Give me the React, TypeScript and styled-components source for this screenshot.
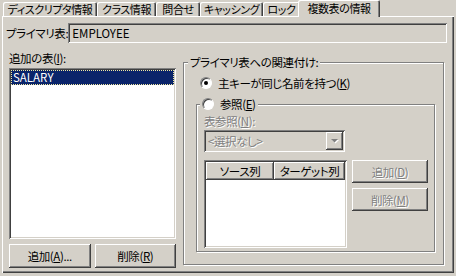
import React from 'react';
import styled, { createGlobalStyle } from 'styled-components';

const FACE = '#d4d0c8';

const GlobalStyle = createGlobalStyle`
  html, body { margin: 0; padding: 0; background: ${FACE}; }
  body {
    font-family: "Noto Sans CJK JP", "Noto Sans", sans-serif;
    font-size: 11.5px;
    color: #000;
    font-feature-settings: "palt";
    letter-spacing: -0.4px;
  }
`;

// 3D borders, classic windows style
const raised = `
  box-shadow: inset -1px -1px #404040, inset 1px 1px #fff,
    inset -2px -2px #808080, inset 2px 2px ${FACE};
`;
const sunken = `
  box-shadow: inset 1px 1px #808080, inset -1px -1px #fff,
    inset 2px 2px #404040, inset -2px -2px ${FACE};
`;

const Window = styled.div`
  width: 456px;
  height: 276px;
  box-sizing: border-box;
  padding: 0 2px 3px 2px;
  background: ${FACE};
  display: flex;
  flex-direction: column;
  overflow: hidden;
`;

const TabStrip = styled.div`
  display: flex;
  align-items: flex-end;
  height: 16px;
  padding-left: 1px;
  position: relative;
  z-index: 1;
`;

const Tab = styled.div<{ $w: number; $active?: boolean }>`
  width: ${p => p.$w}px;
  height: ${p => (p.$active ? 17 : 14)}px;
  margin-left: ${p => (p.$active ? -2 : 0)}px;
  margin-bottom: ${p => (p.$active ? -1 : 0)}px;
  box-sizing: border-box;
  background: ${FACE};
  border-radius: 2px 2px 0 0;
  box-shadow: inset 1px 1px #fff, inset -1px 0 #404040, inset -2px 0 #808080;
  display: flex;
  align-items: center;
  justify-content: center;
  font-size: 11px;
  line-height: 14px;
  white-space: nowrap;
  position: relative;
  z-index: ${p => (p.$active ? 2 : 0)};
  padding-bottom: ${p => (p.$active ? 2 : 0)}px;
`;

const Panel = styled.div`
  flex: 1;
  box-sizing: border-box;
  padding: 7px 8px 0 4px;
  box-shadow: inset 1px 1px #fff, inset -1px -1px #404040, inset -2px -2px #808080;
  display: flex;
  flex-direction: column;
`;

const TopRow = styled.div`
  display: flex;
  align-items: center;
  justify-content: space-between;
  height: 20px;
`;

const Label = styled.span`
  line-height: 14px;
  white-space: nowrap;
  flex-shrink: 0;
`;

const ReadOnlyBox = styled.div`
  width: 379px;
  height: 20px;
  box-sizing: border-box;
  padding: 0 4px;
  ${sunken}
  background: ${FACE};
  display: flex;
  align-items: center;
  letter-spacing: 0;
  flex-shrink: 0;
`;

const Body = styled.div`
  display: flex;
  gap: 7px;
  margin-top: 8px;
  padding-left: 3px;
`;

const LeftColumn = styled.div`
  width: 167px;
  display: flex;
  flex-direction: column;
`;

const ListBox = styled.div`
  height: 171px;
  margin-top: 3px;
  box-sizing: border-box;
  padding: 2px;
  background: #fff;
  ${sunken}
`;

const ListItem = styled.div<{ $selected?: boolean }>`
  height: 15px;
  line-height: 15px;
  padding-left: 2px;
  letter-spacing: 0;
  background: ${p => (p.$selected ? '#0a246a' : 'transparent')};
  color: ${p => (p.$selected ? '#fff' : '#000')};
  outline: ${p => (p.$selected ? '1px dotted #f0e8a0' : 'none')};
  outline-offset: -1px;
`;

const ButtonRow = styled.div`
  display: flex;
  gap: 4px;
  margin-top: 5px;
`;

const Button = styled.div<{ $w: number; $h?: number; $disabled?: boolean }>`
  width: ${p => p.$w}px;
  height: ${p => p.$h ?? 24}px;
  box-sizing: border-box;
  background: ${FACE};
  ${raised}
  display: flex;
  align-items: center;
  justify-content: center;
  white-space: nowrap;
  color: ${p => (p.$disabled ? '#808080' : '#000')};
  text-shadow: ${p => (p.$disabled ? '1px 1px 0 #fff' : 'none')};
`;

const Group = styled.div`
  position: relative;
  width: 261px;
  height: 203px;
  margin-top: 11px;
  box-sizing: border-box;
  border: 1px solid #808080;
  box-shadow: inset 1px 1px #fff, 1px 1px #fff;
  padding: 12px 10px 12px 12px;
  display: flex;
  flex-direction: column;
`;

const GroupTitle = styled.div<{ $left: number }>`
  position: absolute;
  top: -8px;
  left: ${p => p.$left}px;
  padding: 0 2px;
  height: 14px;
  line-height: 14px;
  background: ${FACE};
  display: flex;
  align-items: center;
  gap: 6px;
  white-space: nowrap;
`;

const InnerGroup = styled.div`
  position: relative;
  width: 239px;
  height: 150px;
  margin-top: 13px;
  box-sizing: border-box;
  border: 1px solid #808080;
  box-shadow: inset 1px 1px #fff, 1px 1px #fff;
  padding: 9px 8px 0 7px;
  display: flex;
  flex-direction: column;
`;

const RadioRow = styled.label`
  display: flex;
  align-items: center;
  gap: 6px;
  height: 16px;
  padding-left: 4px;
`;

const RadioCircle = styled.span<{ $checked?: boolean }>`
  width: 12px;
  height: 12px;
  box-sizing: border-box;
  border-radius: 50%;
  background: #fff;
  border: 1px solid;
  border-color: #808080 #fff #fff #808080;
  box-shadow: inset 1px 1px #404040;
  display: flex;
  align-items: center;
  justify-content: center;
  flex-shrink: 0;
  &::after {
    content: '';
    width: 4px;
    height: 4px;
    border-radius: 50%;
    background: ${p => (p.$checked ? '#000' : 'transparent')};
  }
`;

const DisabledText = styled.span`
  color: #808080;
  text-shadow: 1px 1px 0 #fff;
  line-height: 14px;
  white-space: nowrap;
`;

const Combo = styled.div`
  width: 141px;
  height: 22px;
  margin-top: 2px;
  box-sizing: border-box;
  padding: 2px;
  background: ${FACE};
  ${sunken}
  display: flex;
  align-items: center;
`;

const ComboText = styled(DisabledText)`
  flex: 1;
  padding-left: 2px;
`;

const DropButton = styled.div`
  width: 17px;
  height: 18px;
  box-sizing: border-box;
  background: ${FACE};
  ${raised}
  display: flex;
  align-items: center;
  justify-content: center;
`;

const GridRow = styled.div`
  display: flex;
  gap: 5px;
  margin-top: 8px;
`;

const Grid = styled.div`
  width: 143px;
  height: 88px;
  box-sizing: border-box;
  padding: 2px;
  background: #fff;
  ${sunken}
`;

const GridHeader = styled.div`
  display: flex;
  height: 18px;
`;

const HeaderCell = styled.div<{ $w: number }>`
  width: ${p => p.$w}px;
  box-sizing: border-box;
  background: ${FACE};
  box-shadow: inset -1px -1px #404040, inset 1px 1px #fff, inset -2px -2px #808080;
  display: flex;
  align-items: center;
  justify-content: center;
  white-space: nowrap;
`;

const SideButtons = styled.div`
  display: flex;
  flex-direction: column;
  gap: 5px;
`;

const tabs = [
  { label: 'ディスクリプタ情報', w: 94 },
  { label: 'クラス情報', w: 59 },
  { label: '問合せ', w: 44 },
  { label: 'キャッシング', w: 63 },
  { label: 'ロック', w: 37 },
  { label: '複数表の情報', w: 82, active: true },
];

export default function App() {
  return (
    <>
      <GlobalStyle />
      <Window>
        <TabStrip>
          {tabs.map(t => (
            <Tab key={t.label} $w={t.w} $active={t.active}>
              {t.label}
            </Tab>
          ))}
        </TabStrip>
        <Panel>
          <TopRow>
            <Label>プライマリ表:</Label>
            <ReadOnlyBox>EMPLOYEE</ReadOnlyBox>
          </TopRow>
          <Body>
            <LeftColumn>
              <Label>追加の表(<u>I</u>):</Label>
              <ListBox>
                <ListItem $selected>SALARY</ListItem>
              </ListBox>
              <ButtonRow>
                <Button $w={82}>追加(<u>A</u>)...</Button>
                <Button $w={82}>削除(<u>R</u>)</Button>
              </ButtonRow>
            </LeftColumn>
            <Group>
              <GroupTitle $left={4}>プライマリ表への関連付け:</GroupTitle>
              <RadioRow>
                <RadioCircle $checked />
                <span>主キーが同じ名前を持つ(<u>K</u>)</span>
              </RadioRow>
              <InnerGroup>
                <GroupTitle $left={3}>
                  <RadioCircle />
                  <span>参照(<u>E</u>)</span>
                </GroupTitle>
                <DisabledText>表参照(<u>N</u>):</DisabledText>
                <Combo>
                  <ComboText>&lt;選択なし&gt;</ComboText>
                  <DropButton>
                    <svg width="8" height="5" viewBox="0 0 8 5">
                      <path d="M1 1h7L4.5 4.5z" fill="#fff" />
                      <path d="M0 0h7L3.5 3.5z" fill="#808080" />
                    </svg>
                  </DropButton>
                </Combo>
                <GridRow>
                  <Grid>
                    <GridHeader>
                      <HeaderCell $w={68}>ソース列</HeaderCell>
                      <HeaderCell $w={71}>ターゲット列</HeaderCell>
                    </GridHeader>
                  </Grid>
                  <SideButtons>
                    <Button $w={76} $h={23} $disabled>追加(<u>D</u>)</Button>
                    <Button $w={76} $h={23} $disabled>削除(<u>M</u>)</Button>
                  </SideButtons>
                </GridRow>
              </InnerGroup>
            </Group>
          </Body>
        </Panel>
      </Window>
    </>
  );
}
